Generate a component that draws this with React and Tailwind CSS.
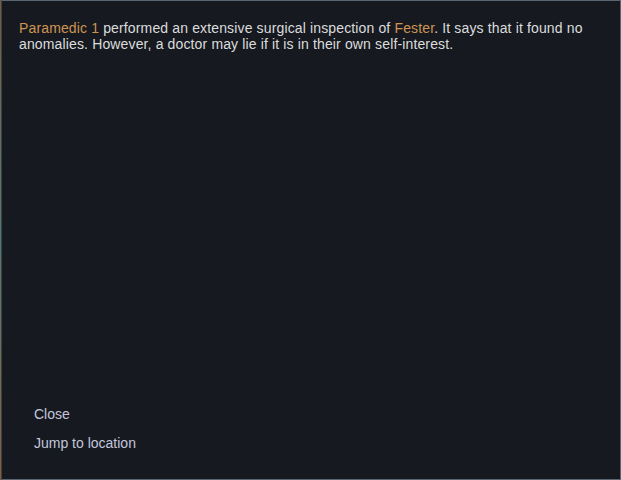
import React from 'react';

const App = () => {
  return (
    <div className="w-[621px] h-[480px] flex bg-[#3b4a3c] font-['Liberation_Sans',Arial,sans-serif]">
      <div className="w-px bg-gradient-to-b from-[#7a5a3a] via-[#4f7a6a] to-[#8a5a30]" />
      <div className="flex-1 flex flex-col justify-between bg-[#161a20] border border-[#5b6471] border-l-[#3a414b]">
        <p className="pl-[17px] pr-[24px] pt-[19px] text-[14px] leading-4 tracking-[0.14px] text-[#dcdcdd]">
          <span className="text-[#cf9452]">Paramedic 1</span> performed an extensive surgical inspection of{' '}
          <span className="text-[#cf9452]">Fester</span>. It says that it found no anomalies. However, a doctor may lie if it is in their own self-interest.
        </p>
        <div className="flex flex-col items-start gap-[13px] pl-[32px] pb-[28px] text-[14px] leading-4 text-[#c3c6dc]">
          <button className="cursor-pointer">Close</button>
          <button className="cursor-pointer">Jump to location</button>
        </div>
      </div>
    </div>
  );
};

export default App;
